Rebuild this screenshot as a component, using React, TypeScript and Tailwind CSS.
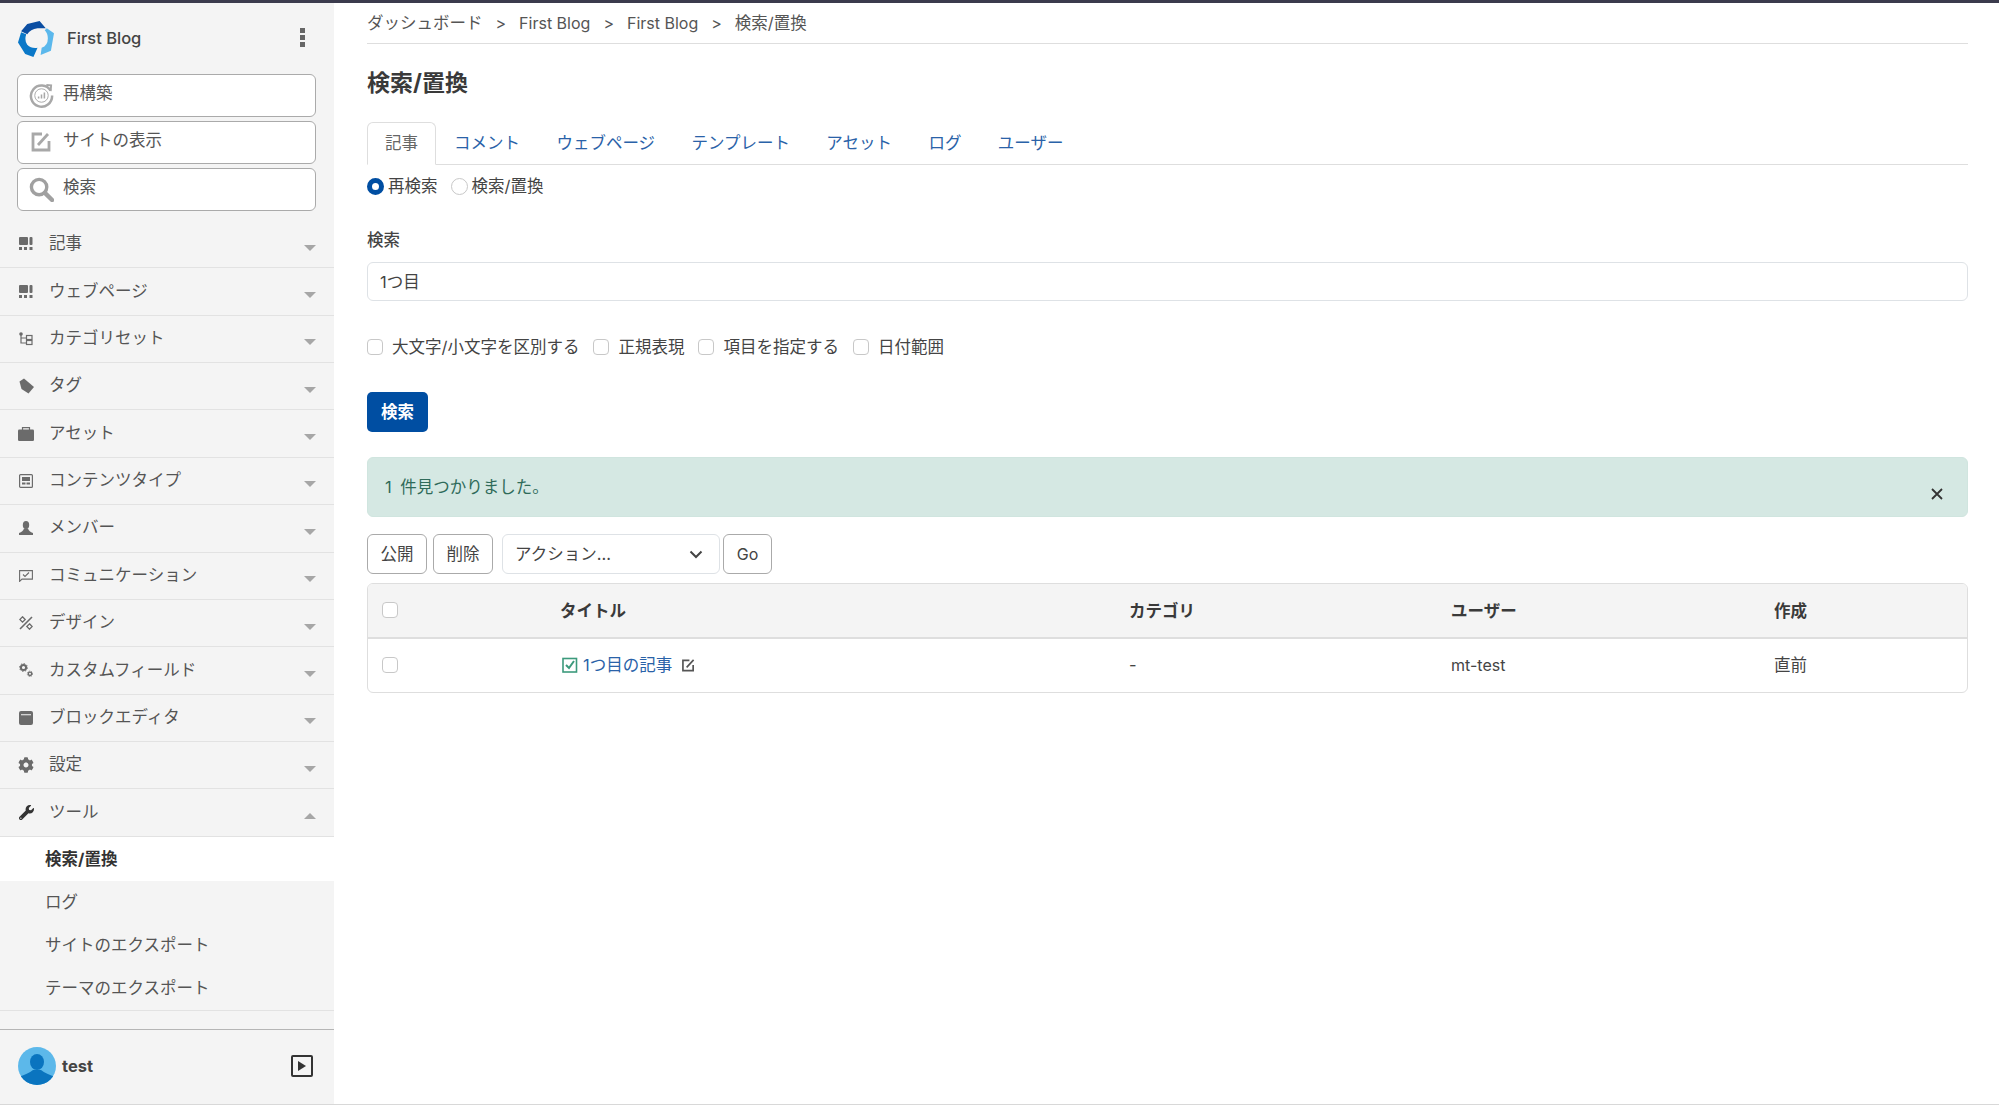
import React from 'react';
import { FaCog, FaWrench } from 'react-icons/fa';

const GridIcon = () => (
  <svg viewBox="0 0 14 14" className="h-[14px] w-[14px] fill-[#6b6b6b]">
    <rect x="0" y="0" width="9" height="8" rx="1" />
    <rect x="10.5" y="0" width="3" height="8" rx="1" />
    <rect x="0" y="10" width="3" height="3" />
    <rect x="5" y="10" width="3" height="3" />
    <rect x="10.5" y="10" width="3" height="3" />
  </svg>
);

const TreeIcon = () => (
  <svg viewBox="0 0 14 14" className="h-[14px] w-[14px]" fill="none" stroke="#6b6b6b" strokeWidth="1.2">
    <circle cx="2" cy="2" r="1.8" fill="#6b6b6b" stroke="none" />
    <path d="M2 3v8h5M2 6h5" />
    <rect x="7.5" y="3.5" width="5.5" height="4" />
    <rect x="7.5" y="8.5" width="5.5" height="4" />
  </svg>
);

const TagIcon = () => (
  <svg viewBox="0 0 15 16" className="h-[16px] w-[15px] fill-[#6b6b6b]">
    <path d="M0.5 3.5L5 0.5L15 9L9.5 15.5L2.5 11Z" strokeLinejoin="round" />
  </svg>
);

const CaseIcon = () => (
  <svg viewBox="0 0 16 14" className="h-[14px] w-[16px]">
    <rect x="0" y="2.5" width="16" height="11.5" rx="1.2" fill="#6b6b6b" />
    <path d="M4.5 3V0.7h7V3" fill="none" stroke="#6b6b6b" strokeWidth="1.2" />
  </svg>
);

const ContentIcon = () => (
  <svg viewBox="0 0 14 14" className="h-[14px] w-[14px]">
    <rect x="0.6" y="0.6" width="12.8" height="12.8" rx="1" fill="none" stroke="#6b6b6b" strokeWidth="1.2" />
    <rect x="3" y="3" width="8" height="4" fill="#6b6b6b" />
    <rect x="3" y="8.5" width="3.5" height="2" fill="#6b6b6b" />
    <rect x="7.5" y="8.5" width="3.5" height="2" fill="#6b6b6b" />
  </svg>
);

const PersonIcon = () => (
  <svg viewBox="0 0 14 14" className="h-[14px] w-[14px] fill-[#6b6b6b]">
    <ellipse cx="7" cy="4" rx="3.2" ry="4" />
    <path d="M0 14V12Q4 10.8 5 7.5H9Q10 10.8 14 12V14Z" />
  </svg>
);

const CommentIcon = () => (
  <svg viewBox="0 0 14 12" className="h-[12px] w-[14px]" fill="none" stroke="#6b6b6b" strokeWidth="1.1">
    <path d="M0.6 0.6h12.8v8.5H3L0.6 11.4z" />
    <path d="M4 4.5l2 2 4-4" />
  </svg>
);

const DesignIcon = () => (
  <svg viewBox="0 0 14 14" className="h-[14px] w-[14px]" fill="none" stroke="#6b6b6b" strokeWidth="1.3">
    <path d="M1 13L13 1" strokeWidth="1.6" />
    <path d="M3.5 0.8L6.2 3.5L3.5 6.2L0.8 3.5Z" />
    <path d="M10.5 7.8L13.2 10.5L10.5 13.2L7.8 10.5Z" />
  </svg>
);

const GearsIcon = () => (
  <svg viewBox="0 0 14 14" className="h-[14px] w-[14px]" fill="none" stroke="#6b6b6b">
    <circle cx="4.5" cy="4.5" r="2.6" strokeWidth="2" />
    <circle cx="4.5" cy="4.5" r="3.9" strokeWidth="1" strokeDasharray="1.5 1.5" />
    <circle cx="11" cy="10.8" r="1.7" strokeWidth="1.4" />
    <circle cx="11" cy="10.8" r="2.7" strokeWidth="0.8" strokeDasharray="1.2 1" />
  </svg>
);

const BookIcon = () => (
  <svg viewBox="0 0 14 14" className="h-[14px] w-[14px] fill-[#6b6b6b]">
    <path d="M2 0h10a2 2 0 0 1 2 2v10a2 2 0 0 1-2 2H2a2 2 0 0 1-2-2V2a2 2 0 0 1 2-2zM2 3.2v1h10v-1z" fillRule="evenodd" />
  </svg>
);

const menu = [
  { label: '記事', icon: <GridIcon /> },
  { label: 'ウェブページ', icon: <GridIcon /> },
  { label: 'カテゴリセット', icon: <TreeIcon /> },
  { label: 'タグ', icon: <TagIcon /> },
  { label: 'アセット', icon: <CaseIcon /> },
  { label: 'コンテンツタイプ', icon: <ContentIcon /> },
  { label: 'メンバー', icon: <PersonIcon /> },
  { label: 'コミュニケーション', icon: <CommentIcon /> },
  { label: 'デザイン', icon: <DesignIcon /> },
  { label: 'カスタムフィールド', icon: <GearsIcon /> },
  { label: 'ブロックエディタ', icon: <BookIcon /> },
  { label: '設定', icon: <FaCog className="h-[16px] w-[16px] text-[#6b6b6b]" /> },
];

const tabs = ['コメント', 'ウェブページ', 'テンプレート', 'アセット', 'ログ', 'ユーザー'];
const checks = ['大文字/小文字を区別する', '正規表現', '項目を指定する', '日付範囲'];
const subMenu = ['ログ', 'サイトのエクスポート', 'テーマのエクスポート'];

const Caret = ({ up }: { up?: boolean }) => (
  <svg viewBox="0 0 12 6" className="mt-[7px] h-[6px] w-[12px] fill-[#a6a6a6]">
    <path d={up ? 'M0 6L6 0l6 6z' : 'M0 0h12L6 6z'} />
  </svg>
);

const SideButton = ({ icon, label }: { icon: React.ReactNode; label: string }) => (
  <button className="flex h-[43px] items-center rounded-[6px] border border-[#aaaaaa] bg-white pl-[10px] text-left text-[#555]">
    <span className="flex w-[26px] justify-center">{icon}</span>
    <span className="mb-[4px] ml-[9px]">{label}</span>
  </button>
);

const CheckBox = () => <span className="block h-[16px] w-[16px] shrink-0 rounded-[4px] border border-[#c8c8c8] bg-white" />;

export default function App() {
  return (
    <div className="flex h-[1108px] w-[1999px] flex-col overflow-hidden bg-white text-[16.5px] text-[#444] [font-family:Inter,'Noto_Sans_CJK_JP',sans-serif]">
      <div className="h-[3px] shrink-0 bg-[#3b3b4d]" />
      <div className="flex h-[1102px] shrink-0 border-b border-[#d8d8d8]">
        {/* Sidebar */}
        <aside className="flex w-[334px] shrink-0 flex-col bg-[#f4f4f4]">
          <div className="flex h-[71px] shrink-0 items-center pl-[18px] pr-[29px]">
            <svg viewBox="0 0 35 35" className="h-[36px] w-[36px]">
              <path d="M3 10L9 3L21 0L27 7L19 7Q12 8 9 13Z" fill="#0b4ea2" />
              <path d="M0 21L3 11L8 13Q6 19 9 23Q13 27 19 26L15 35L7 32Z" fill="#0a78c8" />
              <path d="M28 7L35 12L32 29L22 33L23 26Q29 24 29 17Q29 12 26 9Z" fill="#5bb8ec" />
            </svg>
            <span className="mb-[1px] ml-[13px] flex-1 font-medium text-[#444]">First Blog</span>
            <span className="mb-[3px] flex flex-col gap-[2px]">
              <span className="h-[5px] w-[5px] bg-[#666]" />
              <span className="h-[5px] w-[5px] bg-[#666]" />
              <span className="h-[5px] w-[5px] bg-[#666]" />
            </span>
          </div>
          <div className="flex flex-col gap-[4px] pl-[17px] pr-[18px]">
            <SideButton
              label="再構築"
              icon={
                <svg viewBox="0 0 26 26" className="h-[25px] w-[25px]" fill="none" stroke="#a8a8a8">
                  <path d="M22.5 8A11 11 0 1 0 24 13" strokeWidth="2.6" />
                  <path d="M18 2l5 0.5-0.5 6" strokeWidth="2" />
                  <circle cx="13" cy="13" r="7" strokeWidth="1" />
                  <path d="M10 16v-2M13 16v-4M16 16v-6" strokeWidth="1.6" />
                </svg>
              }
            />
            <SideButton
              label="サイトの表示"
              icon={
                <svg viewBox="0 0 20 20" className="mb-[2px] h-[20px] w-[20px]" fill="none" stroke="#a8a8a8" strokeWidth="2.8">
                  <path d="M11 2H2v16h16V9" />
                  <path d="M7 13L17 2" />
                </svg>
              }
            />
            <SideButton
              label="検索"
              icon={
                <svg viewBox="0 0 26 26" className="h-[25px] w-[25px]" fill="none" stroke="#a0a0a0">
                  <circle cx="10.5" cy="10.5" r="8" strokeWidth="3.5" />
                  <path d="M16.5 16.5L24 24" strokeWidth="4.5" strokeLinecap="round" />
                </svg>
              }
            />
          </div>
          <nav className="mt-[10px] flex flex-col">
            {menu.map((item) => (
              <div key={item.label} className="flex h-[47.36px] items-center border-b border-[#e2e2e2] pl-[18px] pr-[18px] text-[#555]">
                <span className="flex w-[16px] justify-center">{item.icon}</span>
                <span className="mb-[1px] ml-[15px] flex-1">{item.label}</span>
                <Caret />
              </div>
            ))}
            <div className="flex h-[47.36px] items-center border-b border-[#e2e2e2] pl-[18px] pr-[18px] text-[#555]">
              <span className="flex w-[16px] justify-center">
                <FaWrench className="h-[15px] w-[15px] text-[#333]" />
              </span>
              <span className="mb-[1px] ml-[15px] flex-1">ツール</span>
              <Caret up />
            </div>
          </nav>
          <div className="flex h-[44px] items-center bg-white pl-[45px] pt-[1px] font-bold text-[#333]">検索/置換</div>
          <div className="flex flex-col border-b border-[#e2e2e2]">
            {subMenu.map((s) => (
              <div key={s} className="flex h-[43px] items-center pl-[45px] text-[#555]">
                {s}
              </div>
            ))}
          </div>
          <div className="mt-[18px] flex flex-1 items-center border-t border-[#b5b5b5] pb-[1px] pl-[18px] pr-[21px]">
            <svg viewBox="0 0 38 38" className="h-[38px] w-[38px]">
              <clipPath id="avatar-clip">
                <circle cx="19" cy="19" r="19" />
              </clipPath>
              <g clipPath="url(#avatar-clip)">
                <rect width="38" height="38" fill="#5cb8ea" />
                <ellipse cx="19" cy="15" rx="7" ry="8" fill="#0a74bf" />
                <path d="M0 38V30Q10 27 15 23H23Q28 27 38 30V38Z" fill="#0a74bf" />
              </g>
            </svg>
            <span className="ml-[6px] flex-1 font-bold text-[#444]">test</span>
            <span className="mb-[1px] flex h-[22px] w-[22px] items-center justify-center rounded-[2px] border-2 border-[#333]">
              <svg viewBox="0 0 8 10" className="h-[10px] w-[8px] fill-[#333]">
                <path d="M0 0l8 5-8 5z" />
              </svg>
            </span>
          </div>
        </aside>

        {/* Main */}
        <main className="flex-1 pl-[33px] pr-[31px]">
          <div className="flex h-[41px] items-center gap-[13px] border-b border-[#dedede] text-[#555]">
            <span>ダッシュボード</span>
            <span className="text-[16px]">&gt;</span>
            <span className="text-[16px]">First Blog</span>
            <span className="text-[16px]">&gt;</span>
            <span className="text-[16px]">First Blog</span>
            <span className="text-[16px]">&gt;</span>
            <span>検索/置換</span>
          </div>
          <h1 className="flex h-[78px] items-center pt-[1px] text-[23px] font-bold leading-none text-[#3a3a3a]">検索/置換</h1>
          <div className="flex h-[43px] items-stretch border-b border-[#dedede]">
            <div className="-mb-px flex w-[69px] items-center justify-center rounded-t-[6px] border border-b-white border-[#dedede] bg-white text-[#666]">記事</div>
            <div className="ml-[18px] flex items-center gap-[36.4px] text-[#2a62a8]">
              {tabs.map((t) => (
                <span key={t}>{t}</span>
              ))}
            </div>
          </div>
          <div className="mt-[9px] flex h-[24px] items-center text-[#444]">
            <span className="block h-[17px] w-[17px] rounded-full border-[5px] border-[#004ea2] bg-white" />
            <span className="ml-[4px]">再検索</span>
            <span className="ml-[13px] block h-[17px] w-[17px] rounded-full border border-[#c8c8c8] bg-white" />
            <span className="ml-[4px]">検索/置換</span>
          </div>
          <div className="mt-[30px] h-[24px] font-medium leading-[24px] text-[#444]">検索</div>
          <div className="mt-[10px] flex h-[39px] items-center rounded-[6px] border border-[#dee2e6] pl-[12px] pt-[1px] text-[#444]">1つ目</div>
          <div className="mt-[34px] flex h-[24px] items-center gap-[14px] text-[#444]">
            {checks.map((c) => (
              <label key={c} className="flex items-center gap-[9px]">
                <CheckBox />
                {c}
              </label>
            ))}
          </div>
          <button className="mt-[33px] block h-[40px] w-[61px] rounded-[5px] bg-[#004ea2] font-bold text-white">検索</button>
          <div className="mt-[25px] flex h-[60px] items-center justify-between rounded-[6px] border border-[#d0e5df] bg-[#d5e8e3] pl-[17px] pr-[24px] text-[#2f6b5a]">
            <span className="[word-spacing:4px]">1 件見つかりました。</span>
            <svg viewBox="0 0 12 12" className="mt-[14px] h-[12px] w-[12px]" fill="none" stroke="#333" strokeWidth="1.8">
              <path d="M1 1l10 10M11 1L1 11" />
            </svg>
          </div>
          <div className="mt-[17px] flex h-[40px] text-[#444]">
            <button className="h-full w-[60px] rounded-[6px] border border-[#aaaaaa] bg-white">公開</button>
            <button className="ml-[6px] h-full w-[60px] rounded-[6px] border border-[#aaaaaa] bg-white">削除</button>
            <div className="ml-[9px] flex h-full w-[218px] items-center justify-between rounded-[6px] border border-[#dee2e6] bg-white pl-[12px] pr-[16px]">
              <span>アクション...</span>
              <svg viewBox="0 0 14 14" className="h-[14px] w-[14px]" fill="none" stroke="#444" strokeWidth="2">
                <path d="M1.5 4.5L7 10l5.5-5.5" />
              </svg>
            </div>
            <button className="ml-[3px] h-full w-[49px] rounded-[6px] border border-[#aaaaaa] bg-white text-[16px]">Go</button>
          </div>
          <div className="mt-[9px] h-[110px] overflow-hidden rounded-[6px] border border-[#dedede]">
            <table className="w-full table-fixed border-collapse text-left">
              <thead>
                <tr className="h-[54px] border-b-2 border-[#dedede] bg-[#f4f4f4] font-bold text-[#3a3a3a]">
                  <th className="w-[192px] pb-[2px] pl-[14px] font-bold">
                    <CheckBox />
                  </th>
                  <th className="w-[569px] pt-[2px] font-bold">タイトル</th>
                  <th className="w-[322px] pt-[2px] font-bold">カテゴリ</th>
                  <th className="w-[323px] pt-[2px] font-bold">ユーザー</th>
                  <th className="pt-[2px] font-bold">作成</th>
                </tr>
              </thead>
              <tbody>
                <tr className="h-[53px] text-[#444]">
                  <td className="pl-[14px]">
                    <CheckBox />
                  </td>
                  <td>
                    <div className="flex items-center pl-[2px]">
                      <svg viewBox="0 0 16 16" className="h-[16px] w-[16px]" fill="none" stroke="#3c9a7c">
                        <rect x="1" y="1.5" width="13.5" height="13.5" strokeWidth="1.6" />
                        <path d="M4 8l3 3 5-7" strokeWidth="2" />
                      </svg>
                      <span className="ml-[5px] text-[#2a62a8]">1つ目の記事</span>
                      <svg viewBox="0 0 14 14" className="ml-[10px] h-[13px] w-[13px]" fill="none" stroke="#555" strokeWidth="1.8">
                        <path d="M8 1.5H1v11h11V6.5" />
                        <path d="M5 9l7.5-8" />
                      </svg>
                    </div>
                  </td>
                  <td>-</td>
                  <td className="text-[16px]">mt-test</td>
                  <td>直前</td>
                </tr>
              </tbody>
            </table>
          </div>
        </main>
      </div>
    </div>
  );
}
